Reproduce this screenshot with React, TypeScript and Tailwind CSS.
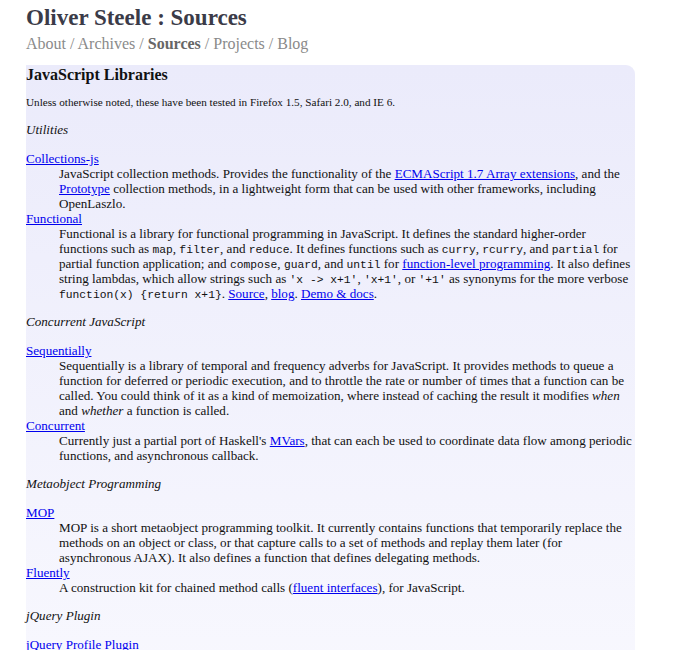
import React from "react";

const A = ({ children }: { children: React.ReactNode }) => (
  <a href="#" className="text-[#0000ee] underline">{children}</a>
);
const C = ({ children }: { children: React.ReactNode }) => (
  <code className="font-['Liberation_Mono',monospace] text-[11.3px] leading-[0px]">{children}</code>
);

function Entry({ name, children }: { name: string; children: React.ReactNode }) {
  return (
    <>
      <dt><A>{name}</A></dt>
      <dd className="ml-[33px]">{children}</dd>
    </>
  );
}

export default function App() {
  return (
    <div className="min-h-[650px] bg-white font-['Liberation_Serif',serif] text-[#111] px-[26px] pt-[4px]">
      <h1 className="text-[23px] font-bold leading-[28px] text-[#3b3b48]">Oliver Steele : Sources</h1>
      <nav className="text-[16px] leading-[22px] text-[#8a8a8a] mt-[1px]">
        About / Archives / <b className="text-[#666]">Sources</b> / Projects / Blog
      </nav>
      <div className="mt-[10px] w-[609px] rounded-tr-[9px] bg-gradient-to-b from-[#ebebfb] to-[#f8f8fe] pb-[20px] text-[13.1px] leading-[15px]">
        <h2 className="text-[16px] font-bold leading-[20px]">JavaScript Libraries</h2>
        <p className="text-[11.2px] leading-[14px] mt-[10px]">Unless otherwise noted, these have been tested in Firefox 1.5, Safari 2.0, and IE 6.</p>
        <p className="italic mt-[13px]">Utilities</p>
        <dl className="mt-[14px]">
          <Entry name="Collections-js">
            JavaScript collection methods. Provides the functionality of the <A>ECMAScript 1.7 Array extensions</A>, and the <A>Prototype</A> collection methods, in a lightweight form that can be used with other frameworks, including OpenLaszlo.
          </Entry>
          <Entry name="Functional">
            Functional is a library for functional programming in JavaScript. It defines the standard higher-order functions such as <C>map</C>, <C>filter</C>, and <C>reduce</C>. It defines functions such as <C>curry</C>, <C>rcurry</C>, and <C>partial</C> for partial function application; and <C>compose</C>, <C>guard</C>, and <C>until</C> for <A>function-level programming</A>. It also defines string lambdas, which allow strings such as <C>'x -&gt; x+1'</C>, <C>'x+1'</C>, or <C>'+1'</C> as synonyms for the more verbose <C>function(x) {"{"}return x+1{"}"}</C>. <A>Source</A>, <A>blog</A>. <A>Demo &amp; docs</A>.
          </Entry>
        </dl>
        <p className="italic mt-[13px]">Concurrent JavaScript</p>
        <dl className="mt-[14px]">
          <Entry name="Sequentially">
            Sequentially is a library of temporal and frequency adverbs for JavaScript. It provides methods to queue a function for deferred or periodic execution, and to throttle the rate or number of times that a function can be called. You could think of it as a kind of memoization, where instead of caching the result it modifies <i>when</i> and <i>whether</i> a function is called.
          </Entry>
          <Entry name="Concurrent">
            Currently just a partial port of Haskell's <A>MVars</A>, that can each be used to coordinate data flow among periodic functions, and asynchronous callback.
          </Entry>
        </dl>
        <p className="italic mt-[13px]">Metaobject Programming</p>
        <dl className="mt-[14px]">
          <Entry name="MOP">
            MOP is a short metaobject programming toolkit. It currently contains functions that temporarily replace the methods on an object or class, or that capture calls to a set of methods and replay them later (for asynchronous AJAX). It also defines a function that defines delegating methods.
          </Entry>
          <Entry name="Fluently">
            A construction kit for chained method calls (<A>fluent interfaces</A>), for JavaScript.
          </Entry>
        </dl>
        <p className="italic mt-[13px]">jQuery Plugin</p>
        <dl className="mt-[14px]">
          <Entry name="jQuery Profile Plugin">
            A profiler for jQuery selectors.
          </Entry>
        </dl>
      </div>
    </div>
  );
}
